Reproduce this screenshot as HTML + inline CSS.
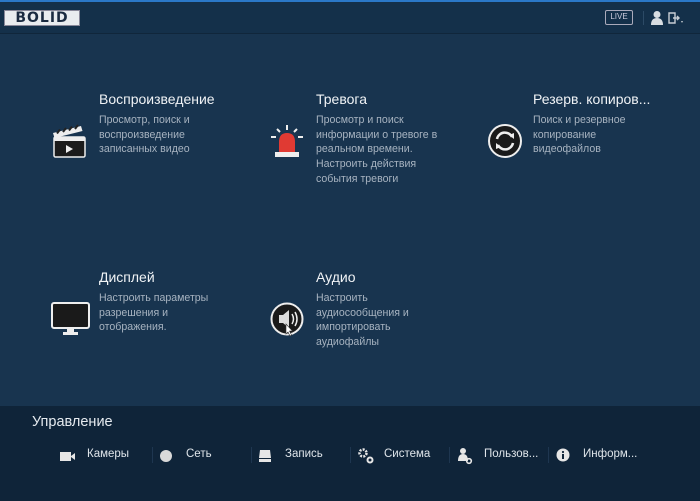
<!DOCTYPE html>
<html><head><meta charset="utf-8"><style>
*{margin:0;padding:0;box-sizing:border-box}
body{width:700px;height:501px;overflow:hidden;background:#18344f;font-family:"Liberation Sans","DejaVu Sans",sans-serif;position:relative;color:#e8edf2}
.top{position:absolute;left:0;top:0;width:700px;height:34px;background:#14304a;border-top:2px solid #2b78c8;border-bottom:1px solid #10263b}
.logo{position:absolute;left:4px;top:10px;width:76px;height:16px;background:#e9ecef;border:1px solid #889;color:#1a2a40;font-weight:bold;font-size:14px;letter-spacing:1px;text-align:center;line-height:14px;font-family:"DejaVu Sans",sans-serif}
.live{position:absolute;left:605px;top:10px;width:28px;height:15px;border:1.5px solid #aab;border-radius:2px;font-size:8px;line-height:12px;text-align:center;color:#ccd}
.t{position:absolute;font-size:14px;color:#f0f3f6;white-space:nowrap}
.d{position:absolute;font-size:10.6px;line-height:14.7px;color:#a7b3c0;white-space:nowrap}
.bot{position:absolute;left:0;top:406px;width:700px;height:95px;background:#0f2439}
.bt{position:absolute;left:32px;top:414px;font-size:14.5px;color:#e6ebf0}
.m{position:absolute;top:448px;font-size:11.5px;color:#dfe5ea;white-space:nowrap}
.sep{position:absolute;top:447px;width:1px;height:16px;background:#1e3650}
</style></head><body>
<div class="top"></div>
<div class="logo">BOLID</div>
<div class="live">LIVE</div>
<div style="position:absolute;left:643px;top:11px;width:1px;height:14px;background:#2c4a66"></div>
<svg style="position:absolute;left:650px;top:10px" width="36" height="16"><circle cx="7" cy="4.5" r="3.5" fill="#d8dde2"/><path d="M1 15 Q1 8 7 8 Q13 8 13 15Z" fill="#d8dde2"/><path d="M19 3h6v10h-6z" fill="none" stroke="#c8ced4" stroke-width="1.4"/><path d="M23 8h6M27 6l2 2-2 2" stroke="#c8ced4" stroke-width="1.4" fill="none"/><path d="M31 11l2 0-1 2z" fill="#c8ced4"/></svg>

<svg style="position:absolute;left:52px;top:124px" width="34" height="34" viewBox="0 0 34 34"><rect x="2" y="13" width="31" height="20" rx="1.5" fill="#1b1b1b" stroke="#eee" stroke-width="1.5"/><path d="M1 9 L29 2 L30.5 7 L2.5 14Z" fill="#eee"/><path d="M5 9.5l3-4M11 8l3-4M17 6.5l3-4M23 5l3-4" stroke="#222" stroke-width="2"/><rect x="2" y="13" width="31" height="4" fill="#eee"/><path d="M14 21v8l7-4z" fill="#eee"/></svg>
<div class="t" style="left:99px;top:91px">Воспроизведение</div>
<div class="d" style="left:99px;top:113px">Просмотр, поиск и<br>воспроизведение<br>записанных видео</div>

<svg style="position:absolute;left:269px;top:123px" width="36" height="36" viewBox="0 0 36 36"><path d="M10 29 V19 Q10 10 18 10 Q26 10 26 19 V29Z" fill="#e03a33"/><rect x="6" y="29" width="24" height="5" fill="#eee"/><path d="M18 2v5M8 6l3 3M28 6l-3 3M2 14h5M29 14h5" stroke="#eee" stroke-width="2"/></svg>
<div class="t" style="left:316px;top:91px">Тревога</div>
<div class="d" style="left:316px;top:113px">Просмотр и поиск<br>информации о тревоге в<br>реальном времени.<br>Настроить действия<br>события тревоги</div>

<svg style="position:absolute;left:487px;top:123px" width="36" height="36" viewBox="0 0 36 36"><circle cx="18" cy="18" r="16" fill="#1a1a1a" stroke="#eee" stroke-width="2"/><path d="M10 16 A8 8 0 0 1 25 14" stroke="#eee" stroke-width="2.5" fill="none"/><path d="M26 20 A8 8 0 0 1 11 22" stroke="#eee" stroke-width="2.5" fill="none"/><path d="M22 12l5 4 0-6z" fill="#eee"/><path d="M14 24l-5-4 0 6z" fill="#eee"/></svg>
<div class="t" style="left:533px;top:91px">Резерв. копиров...</div>
<div class="d" style="left:533px;top:113px">Поиск и резервное<br>копирование<br>видеофайлов</div>

<svg style="position:absolute;left:51px;top:302px" width="40" height="36" viewBox="0 0 40 36"><rect x="1" y="1" width="37" height="25" rx="2" fill="#1a1a1a" stroke="#eee" stroke-width="2"/><rect x="16" y="26" width="7" height="5" fill="#eee"/><rect x="12" y="30" width="15" height="3" fill="#eee"/></svg>
<div class="t" style="left:99px;top:269px">Дисплей</div>
<div class="d" style="left:99px;top:291px">Настроить параметры<br>разрешения и<br>отображения.</div>

<svg style="position:absolute;left:270px;top:302px" width="36" height="36" viewBox="0 0 36 36"><circle cx="17" cy="17" r="15.5" fill="#1a1a1a" stroke="#eee" stroke-width="2"/><path d="M9 13h4l6-5v18l-6-5h-4z" fill="#ddd"/><path d="M22 12q3 5 0 10M25 10q4 7 0 14" stroke="#eee" stroke-width="1.5" fill="none"/><path d="M16 22l0 10 2-2 2 4 1.5-1-2-4h3z" fill="#fff" stroke="#333" stroke-width=".6"/></svg>
<div class="t" style="left:316px;top:269px">Аудио</div>
<div class="d" style="left:316px;top:291px">Настроить<br>аудиосообщения и<br>импортировать<br>аудиофайлы</div>

<div class="bot"></div>
<div class="bt">Управление</div>
<svg style="position:absolute;left:60px;top:450px" width="16" height="12"><rect x="0" y="2" width="11" height="9" fill="#e6e6e6"/><path d="M11 6l4-3v7l-4-3z" fill="#e6e6e6"/></svg>
<div class="m" style="left:87px">Камеры</div>
<div class="sep" style="left:152px"></div>
<svg style="position:absolute;left:159px;top:449px" width="14" height="14"><circle cx="7" cy="7" r="6" fill="#d9d9d9"/></svg>
<div class="m" style="left:186px">Сеть</div>
<div class="sep" style="left:251px"></div>
<svg style="position:absolute;left:258px;top:449px" width="14" height="14"><path d="M2 1h10l1 8H1z" fill="#e6e6e6"/><rect x="1" y="10" width="12" height="3" fill="#e6e6e6"/></svg>
<div class="m" style="left:285px">Запись</div>
<div class="sep" style="left:350px"></div>
<svg style="position:absolute;left:357px;top:447px" width="18" height="18"><circle cx="6" cy="6" r="3.5" fill="none" stroke="#e6e6e6" stroke-width="2.5" stroke-dasharray="2 1.2"/><circle cx="13" cy="13" r="2.5" fill="none" stroke="#e6e6e6" stroke-width="2"/></svg>
<div class="m" style="left:384px">Система</div>
<div class="sep" style="left:449px"></div>
<svg style="position:absolute;left:457px;top:447px" width="16" height="18"><circle cx="6" cy="4" r="3" fill="#e6e6e6"/><path d="M1 14q0-7 5-7t5 7z" fill="#e6e6e6"/><circle cx="12" cy="14" r="2.3" fill="none" stroke="#e6e6e6" stroke-width="1.6"/></svg>
<div class="m" style="left:484px">Пользов...</div>
<div class="sep" style="left:548px"></div>
<svg style="position:absolute;left:556px;top:448px" width="14" height="14"><circle cx="7" cy="7" r="6.5" fill="#e6e6e6"/><rect x="6" y="6" width="2" height="5" fill="#0f2439"/><circle cx="7" cy="4" r="1.1" fill="#0f2439"/></svg>
<div class="m" style="left:583px">Информ...</div>
</body></html>
